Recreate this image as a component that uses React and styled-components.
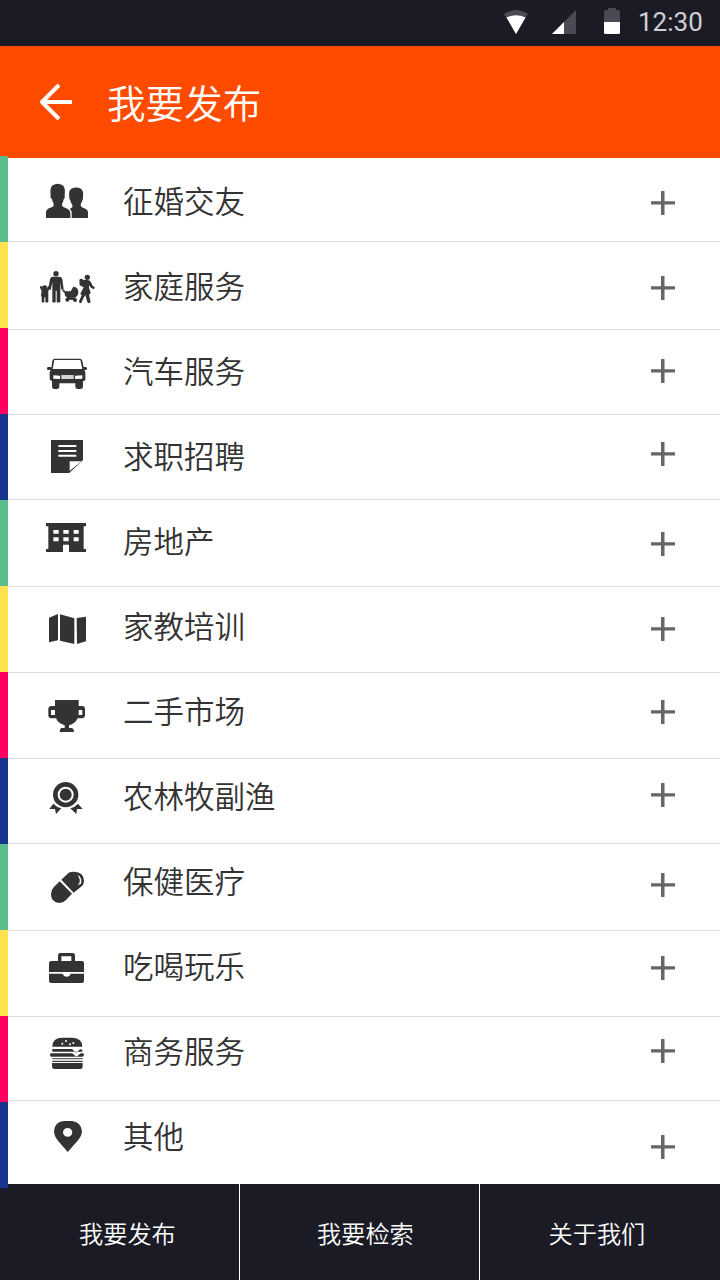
import React, { Component } from "react";
import styled, { createGlobalStyle } from "styled-components";

const GlobalStyle = createGlobalStyle`
  * {
    box-sizing: border-box;
  }
  body {
    margin: 0;
    background: #fff;
    font-family: "Noto Sans CJK SC", sans-serif;
  }
`;

const Screen = styled.div`
  display: flex;
  flex-direction: column;
  width: 720px;
  height: 1280px;
  overflow: hidden;
`;

const StatusBar = styled.div`
  display: flex;
  flex: none;
  justify-content: flex-end;
  height: 46px;
  padding: 8px 17px 0 0;
  background: #1b1b25;
`;

const StatusIcon = styled.svg`
  width: 24px;
  height: 26px;
  margin-right: 24px;
`;

const Clock = styled.span`
  width: 65px;
  margin-left: -10px;
  font: 400 26px/28px Roboto, sans-serif;
  color: #cfcfd6;
  white-space: nowrap;
`;

const Header = styled.header`
  display: flex;
  flex: none;
  align-items: center;
  height: 112px;
  padding-left: 38px;
  background: #ff4b00;
  color: #fff;
`;

const BackArrow = styled.svg`
  width: 36px;
  height: 40px;
  fill: none;
  stroke: #fff;
  stroke-width: 12;
  stroke-linejoin: round;
`;

const Title = styled.h1`
  margin: 0 0 2px 33px;
  font-size: 38.6px;
  line-height: 56px;
  font-weight: 350;
`;

const Main = styled.main`
  display: flex;
  flex: none;
  height: 1026px;
`;

const Stripes = styled.div`
  flex: none;
  width: 8px;
  height: 1032px;
  margin-top: -2px;
  z-index: 1;
`;

const Stripe = styled.div`
  height: 86px;
  background: ${props => props.$color};
`;

const List = styled.ul`
  flex: 1;
  margin: 0;
  padding: 0;
  list-style: none;
`;

const Row = styled.li`
  display: flex;
  align-items: flex-start;
  height: ${props => props.$height}px;
  padding: 0 45px 0 32px;
  border-bottom: 1px solid #dedede;

  &:last-child {
    border-bottom: 0;
  }
`;

const RowIcon = styled.svg`
  flex: none;
  width: 56px;
  height: 40px;
  margin-top: ${props => props.$top}px;
  fill: #333;
`;

const Label = styled.span`
  flex: 1;
  margin-top: ${props => props.$top}px;
  padding-left: 27px;
  font-size: 30.5px;
  line-height: 80px;
  font-weight: 350;
  color: #333;
`;

const Plus = styled.svg`
  flex: none;
  width: 24px;
  height: 24px;
  margin-top: ${props => props.$top}px;
  fill: #666;
`;

const Footer = styled.nav`
  display: flex;
  flex: none;
  height: 96px;
  background: #1b1b25;
`;

const Tab = styled.a`
  width: 240px;
  padding-left: ${props => props.$indent}px;
  border-right: 1px solid #fff;
  font-size: 24.2px;
  line-height: 98px;
  font-weight: 350;
  color: #fff;

  &:last-child {
    border-right: 0;
  }
`;

const stripes = ["#5bbd8c", "#ffe24d", "#ff0062", "#18368f"];

const PeopleIcon = (
  <>
    <path d="M138 189V171Q139 164 147 160L157 156Q162 153 161 146Q157 140 156 132Q150 130 152 120Q149 98 158 91Q173 82 188 91Q197 98 194 120Q196 130 191 133Q190 141 186 146Q185 153 190 156L202 161Q210 164 211 174V189Z" />
    <path d="M215 189V170L210 161L217 157Q219 152 215 146Q212 143 211 136Q207 134 208 126Q205 107 214 101Q229 94 243 101Q252 108 249 126Q250 134 247 136Q246 143 242 147Q241 154 246 157L256 161Q264 164 264 174V189Z" />
  </>
);

const FamilyIcon = (
  <>
    <circle cx="168" cy="86" r="8" />
    <path d="M157 95H179Q185 96 187 103L191 133L184 134L181 112V171Q175 174 170 171V137H167V171Q162 174 157 171V112L152 135L145 133L150 103Q152 96 157 95Z" />
    <circle cx="134" cy="129" r="8" />
    <path d="M119 125L124 122L129 134H140L145 122L150 126L145 139V171Q141 174 136 171V157H133V171Q129 174 125 171V157L123 151L125 139Z" />
    <path d="M188 132L197 139H212L220 125Q236 127 235 142Q234 155 225 158H202Q193 153 194 144L187 137Z" />
    <circle cx="202" cy="164" r="6" />
    <circle cx="225" cy="165" r="6" />
    <path d="M201 155L226 158L224 165L202 164Z" />
    <circle cx="262" cy="97" r="8" />
    <path d="M238 104Q244 98 249 104L262 105Q270 105 273 112L277 121L285 128L281 133L271 127L267 120L267 128L272 144L267 149L272 172Q266 177 262 172L256 150L251 158L244 174Q237 176 237 169L245 151L241 146L251 127L239 121Z" />
  </>
);

const CarIcon = (
  <>
    <path fillRule="evenodd" d="M164 86H240Q245 86 247 92L253 121Q256 123 256 128V150Q255 153 249 153V171Q248 177 241 177H232Q226 176 226 170V160H178V170Q177 177 171 177H162Q156 176 156 170V153Q149 152 149 147V127Q149 123 153 120L157 92Q159 86 164 86ZM163 90L158 117H247L241 90ZM160 136V146L180 147V137ZM184 135V147H221V135ZM225 137V147L247 146V136Z" />
    <path d="M184 135H221V147H184Z" opacity="0.22" />
    <rect x="141" y="111" width="14" height="9" rx="4" />
    <rect x="248" y="111" width="13" height="9" rx="4" />
  </>
);

const NoteIcon = (
  <path fillRule="evenodd" d="M153 330H249V390L208 429H153ZM175 345V351H229V345ZM175 360V366H229V360ZM175 374V380H229V374ZM209 394V423L244 394Z" />
);

const BuildingIcon = (
  <path fillRule="evenodd" d="M138 69H258V79H251V147H258V156H207V134H189V156H138V147H145V79H138ZM160 90V101H176V90ZM190 90V101H206V90ZM221 90V101H236V90ZM160 112V124H176V112ZM190 112V124H206V112ZM221 112V124H236V112Z" />
);

const MapIcon = (
  <>
    <path d="M147 353L174 342V421L147 427Z" />
    <path d="M180 343L223 355V432L180 422Z" />
    <path d="M230 354L258 350V424L231 432Z" />
  </>
);

const TrophyIcon = (
  <path fillRule="evenodd" d="M165 90H236V108H248Q255 109 255 116V137Q254 144 247 145H233Q226 161 207 166V174H216Q222 176 222 186H179Q179 176 184 174H194V166Q174 160 168 145H153Q145 144 145 137V116Q145 109 153 108H165ZM153 120V135H165V120ZM236 120V135H247V120Z" />
);

const BadgeIcon = (
  <>
    <circle cx="197" cy="374" r="18" />
    <circle cx="197" cy="374" r="31" fill="none" stroke="#333" strokeWidth="14" />
    <path d="M160 401Q169 411 184 415L168 432L165 417H148Z" />
    <path d="M234 401Q226 411 211 415L229 432L231 417H248Z" />
  </>
);

const PillIcon = (
  <>
    <path d="M179 124L216 161L198 180Q190 189 178 189Q153 187 153 162Q153 151 161 142Z" />
    <path d="M184 119L206 98Q211 95 222 95Q252 96 252 123Q252 132 246 138L221 158Z" />
    <path d="M233 105Q247 111 243 131L234 136Q243 119 233 105Z" fill="#fff" />
    <path d="M234 111Q242 120 237 130" fill="none" stroke="#333" strokeWidth="2" />
  </>
);

const BriefcaseIcon = (
  <path fillRule="evenodd" d="M174 363V345Q175 339 181 339H219Q225 340 225 346V363H247Q252 364 252 369V396H147V369Q148 363 153 363ZM184 349V363H214V349ZM147 401H188Q191 410 200 410Q209 410 212 401H252V423Q252 429 246 429H154Q147 429 147 423Z" />
);

const BurgerIcon = (
  <>
    <path fillRule="evenodd" d="M157 110Q157 83 187 83H217Q247 84 247 110ZM184 101A3 3 0 1 0 190 101A3 3 0 1 0 184 101ZM195 93A3 3 0 1 0 201 93A3 3 0 1 0 195 93ZM207 103A3 3 0 1 0 213 103A3 3 0 1 0 207 103ZM217 99A3 3 0 1 0 223 99A3 3 0 1 0 217 99Z" />
    <path d="M157 117H216L228 128L240 118L247 119V125H157Z" />
    <path d="M153 130H219L229 139L240 130H249Q252 131 252 135Q251 139 248 140H153Q150 139 150 135Q150 131 153 130Z" />
    <path d="M217 130L229 140L242 130L239 127L229 135L221 128Z" fill="#fff" />
    <path d="M157 144H248V146H157ZM157 153H248V156H157Z" />
    <path d="M156 146H248V153H156Z" opacity="0.18" />
    <path d="M156 159H248V171Q247 177 241 177H163Q157 177 156 171Z" />
  </>
);

const PinIcon = (
  <path fillRule="evenodd" d="M203 426L174 392Q162 378 162 363Q164 336 191 333H217Q244 337 246 364Q245 379 233 392ZM189 367A14 13 0 1 0 217 367A14 13 0 1 0 189 367Z" />
);

// tops are measured from the upper edge of each row
const categories = [
  { name: "征婚交友", height: 84, top: 2, iconTop: 23, plusTop: 33, icon: PeopleIcon, y: 78 },
  { name: "家庭服务", height: 88, top: 3, iconTop: 26, plusTop: 34, icon: FamilyIcon, y: 69 },
  { name: "汽车服务", height: 85, top: 0, iconTop: 25, plusTop: 29, icon: CarIcon, y: 75 },
  { name: "求职招聘", height: 85, top: 0, iconTop: 23, plusTop: 27, icon: NoteIcon, y: 324 },
  { name: "房地产", height: 87, top: 0, iconTop: 18, plusTop: 32, icon: BuildingIcon, y: 54 },
  { name: "家教培训", height: 86, top: -2, iconTop: 23, plusTop: 30, icon: MapIcon, y: 330 },
  { name: "二手市场", height: 86, top: -3, iconTop: 23, plusTop: 27, icon: TrophyIcon, y: 78 },
  { name: "农林牧副渔", height: 85, top: -4, iconTop: 19, plusTop: 24, icon: BadgeIcon, y: 324 },
  { name: "保健医疗", height: 87, top: -4, iconTop: 24, plusTop: 29, icon: PillIcon, y: 84 },
  { name: "吃喝玩乐", height: 86, top: -6, iconTop: 18, plusTop: 25, icon: BriefcaseIcon, y: 327 },
  { name: "商务服务", height: 84, top: -7, iconTop: 17, plusTop: 22, icon: BurgerIcon, y: 72 },
  { name: "其他", height: 83, top: -6, iconTop: 16, plusTop: 34, icon: PinIcon, y: 321 }
];

const tabs = [
  { name: "我要发布", indent: 79 },
  { name: "我要检索", indent: 77 },
  { name: "关于我们", indent: 68.5 }
];

class App extends Component {
  render() {
    return (
      <Screen>
        <GlobalStyle />
        <StatusBar>
          <StatusIcon viewBox="0 0 24 26">
            <path d="M0 6Q12 -2 24 6L12 26Z" fill="#4b4a54" />
            <path d="M2.5 9.5Q12 5 21.5 9.5L12 26Z" fill="#fff" />
          </StatusIcon>
          <StatusIcon viewBox="0 0 24 26">
            <path d="M0 26L24 2V26Z" fill="#4b4a54" />
            <path d="M0 26L12 14V26Z" fill="#fff" />
          </StatusIcon>
          <StatusIcon viewBox="0 0 24 26">
            <path d="M8 0H16V2H18.500Q20 2 20 3.500V14H4V3.500Q4 2 5.500 2H8Z" fill="#4b4a54" />
            <path d="M4 14H20V24.500Q20 26 18.500 26H5.500Q4 26 4 24.500Z" fill="#fff" />
          </StatusIcon>
          <Clock>12:30</Clock>
        </StatusBar>
        <Header>
          <BackArrow viewBox="114 66 108 120">
            <path d="M177 75L126 126L177 177M126 126H216" />
          </BackArrow>
          <Title>我要发布</Title>
        </Header>
        <Main>
          <Stripes>
            {categories.map((item, i) => (
              <Stripe key={item.name} $color={stripes[i % 4]} />
            ))}
          </Stripes>
          <List>
            {categories.map(item => (
              <Row key={item.name} $height={item.height}>
                <RowIcon $top={item.iconTop} viewBox={`120 ${item.y} 168 120`}>
                  {item.icon}
                </RowIcon>
                <Label $top={item.top}>{item.name}</Label>
                <Plus $top={item.plusTop} viewBox="0 0 24 24">
                  <path d="M10 0H13.500V10.200H24V13.500H13.500V24H10V13.500H0V10.200H10Z" />
                </Plus>
              </Row>
            ))}
          </List>
        </Main>
        <Footer>
          {tabs.map(tab => (
            <Tab key={tab.name} $indent={tab.indent}>
              {tab.name}
            </Tab>
          ))}
        </Footer>
      </Screen>
    );
  }
}

export default App;
